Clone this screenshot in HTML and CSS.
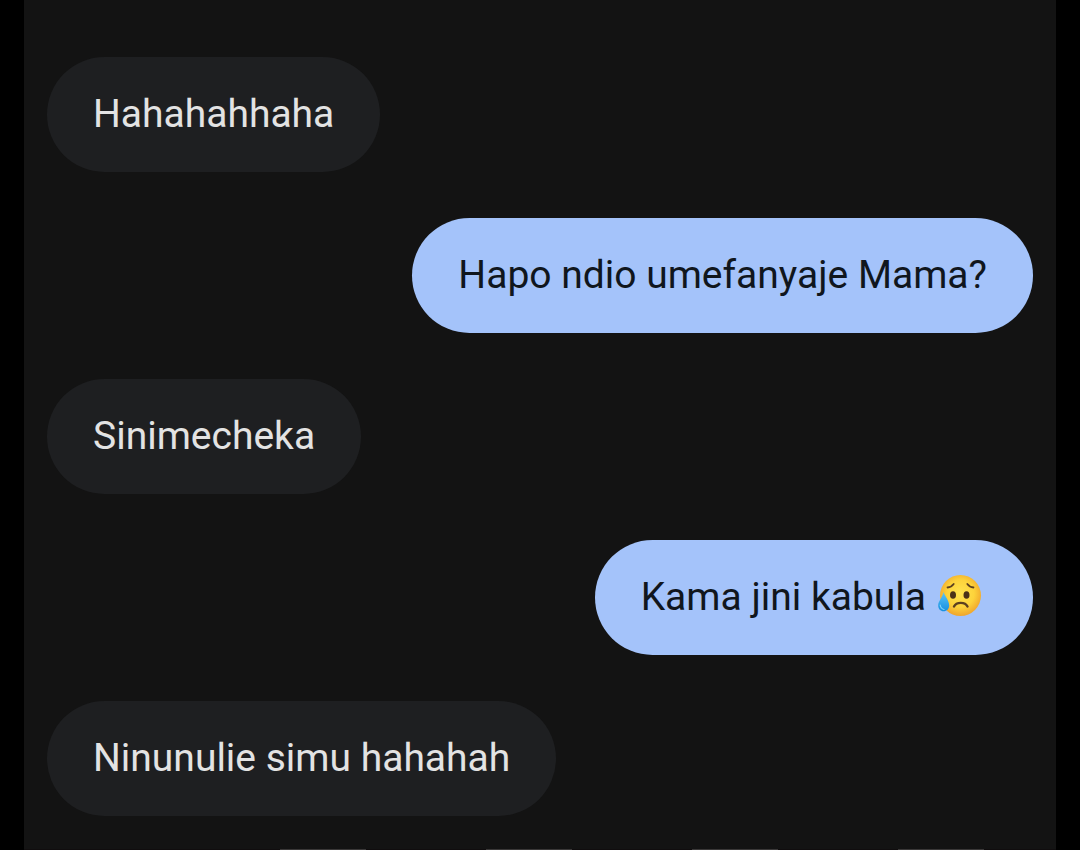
FILE: index.html
```
<!DOCTYPE html>
<html lang="sw">
<head>
    <meta charset="UTF-8">
    <meta name="viewport" content="width=device-width, initial-scale=1.0">
    <title>Messages</title>
    <link rel="stylesheet" href="styles.css">
</head>
<body>
    <div class="screen">
        <main class="thread">
            <div class="message received">Hahahahhaha</div>
            <div class="message sent">Hapo ndio umefanyaje Mama?</div>
            <div class="message received">Sinimecheka</div>
            <div class="message sent">
                <span>Kama jini kabula</span>
                <svg class="emoji" viewBox="0 0 44 44" role="img" aria-label="Sad but relieved face">
                    <defs>
                        <radialGradient id="face" cx="50%" cy="45%" r="55%">
                            <stop offset="0" stop-color="#ffe34f"/>
                            <stop offset="0.6" stop-color="#fdd33b"/>
                            <stop offset="1" stop-color="#f0a52c"/>
                        </radialGradient>
                        <linearGradient id="tear" x1="0" y1="0" x2="0" y2="1">
                            <stop offset="0" stop-color="#5ac4f7"/>
                            <stop offset="1" stop-color="#168fdf"/>
                        </linearGradient>
                    </defs>
                    <circle cx="22.5" cy="20.5" r="20.5" fill="url(#face)"/>
                    <g fill="none" stroke="#5d4020" stroke-width="1.8" stroke-linecap="round">
                        <path d="M9.5 12.5c2.6-.3 4.8-1.6 6.200-3.500"/>
                        <path d="M35.5 12.5c-2.600-.3-4.800-1.600-6.200-3.500"/>
                        <path d="M16 31.500c2.300-4.800 11.200-4.800 13.500 0" stroke-width="2.400"/>
                    </g>
                    <ellipse cx="15" cy="20" rx="3" ry="3.8" fill="#4b3218"/>
                    <ellipse cx="28.5" cy="20" rx="3" ry="3.8" fill="#4b3218"/>
                    <path d="M5.500 17c1.500 4.500 5.700 8.500 5.700 13.500 0 3.300-2.400 5.800-5.600 5.800S.2 33.800.2 30.500C.2 26 4.500 22.500 5.500 17z" fill="url(#tear)"/>
                    <path d="M2.200 30c.3 2.800 1.800 4 3.800 4.500" fill="none" stroke="#7bd3fb" stroke-width="1.2" stroke-linecap="round"/>
                </svg>
            </div>
            <div class="message received">Ninunulie simu hahahah</div>
        </main>
        <footer class="dock">
            <span class="chip"></span>
            <span class="chip"></span>
            <span class="chip"></span>
            <span class="chip"></span>
        </footer>
    </div>
</body>
</html>
```

FILE: styles.css
```
* {
    margin: 0;
    padding: 0;
    box-sizing: border-box;
}

body {
    height: 100vh;
    overflow: hidden;
    padding: 0 24px;
    background: #000;
    font-family: Roboto, sans-serif;
}

.screen {
    min-height: 100vh;
    background: #131313;
}

.thread {
    display: flex;
    flex-direction: column;
    gap: 46px;
    padding: 57px 23px 33px;
}

.message {
    display: flex;
    align-items: center;
    gap: 12px;
    max-width: 80%;
    padding: 33px 46px 34px;
    border-radius: 58px;
    font-size: 39px;
    line-height: 48px;
}

.received {
    align-self: flex-start;
    background: #1e1f21;
    color: #e3e3e3;
}

.sent {
    align-self: flex-end;
    background: #a4c3fa;
    color: #10161d;
}

.emoji {
    width: 44px;
    height: 44px;
    margin-right: 5px;
}

/* buttons peeking in under the conversation */
.dock {
    display: flex;
    justify-content: space-between;
    padding: 0 72px 0 256px;
    background: #100d0e;
}

.chip {
    width: 86px;
    height: 24px;
    background: #3a3838;
}
```
